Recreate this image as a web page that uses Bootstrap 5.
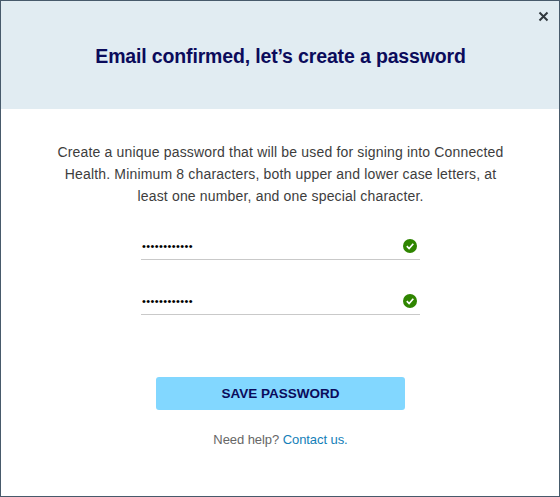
<!DOCTYPE html>
<html lang="en">
<head>
<meta charset="utf-8">
<meta name="viewport" content="width=device-width, initial-scale=1">
<title>Create a password</title>
<link href="https://cdn.jsdelivr.net/npm/bootstrap@5.3.0/dist/css/bootstrap.min.css" rel="stylesheet">
<style>
body { font-family: "Liberation Sans", Arial, sans-serif; }
.dialog { height: 497px; border: 1px solid #475a6b; }
.dialog-top { height: 108px; background: #e1ecf2; }
.dialog-title { font-size: 19.5px; line-height: 24px; color: #0b0b5b; letter-spacing: -.15px; margin: 1px 0 0 1px; white-space: nowrap; }
.close-btn { top: 10px; right: 10px; line-height: 0; }
.intro { font-size: 14px; line-height: 22px; color: #3d3d3d; letter-spacing: .17px; margin: 32px 0 0 1px; white-space: nowrap; }
.fields { width: 279px; margin: 25px 0 0 1px; gap: 27px; }
.field { height: 28px; border-bottom: 1px solid #c9c9c9; }
.field input { font: 11px "Liberation Sans", Arial, sans-serif; letter-spacing: .4px; color: #000; padding: 0 0 0 1px; height: 26px; outline: 0; }
.field svg { margin: 0 3px 0 0; }
.save-btn { width: 249px; height: 33px; margin: 62px 0 0 1px; font-size: 13.5px; line-height: 33px; color: #0b0b5b; background: #82d7ff; border-radius: 3px; }
.help { font-size: 13px; line-height: 20px; color: #666; letter-spacing: -.07px; margin: 20px 0 0 1px; }
.help a { color: #1480b8; }
</style>
<script src="https://cdn.jsdelivr.net/npm/bootstrap@5.3.0/dist/js/bootstrap.bundle.min.js"></script>
</head>
<body>
<main class="dialog position-relative d-flex flex-column align-items-center overflow-hidden bg-white">
  <header class="dialog-top w-100 d-flex align-items-center justify-content-center">
    <h1 class="dialog-title fw-bold">Email confirmed, let’s create a password</h1>
    <button type="button" class="close-btn position-absolute border-0 bg-transparent p-0" aria-label="Close">
      <svg width="11" height="11" viewBox="0 0 11 11" fill="none" stroke="#30383e" stroke-width="2"><path d="M1.5 1.5l8 8M9.5 1.5l-8 8"/></svg>
    </button>
  </header>
  <p class="intro text-center">Create a unique password that will be used for signing into Connected<br>Health. Minimum 8 characters, both upper and lower case letters, at<br>least one number, and one special character.</p>
  <form class="fields d-flex flex-column">
    <div class="field d-flex align-items-center">
      <input type="password" class="flex-grow-1 border-0 bg-transparent" value="xxxxxxxxxxxx" aria-label="Password">
      <svg width="14" height="14" viewBox="0 0 14 14"><circle cx="7" cy="7" r="7" fill="#2f8500"/><path d="M3.8 7.2l2.3 2.3 4.2-4.8" fill="none" stroke="#fff" stroke-width="1.7"/></svg>
    </div>
    <div class="field d-flex align-items-center">
      <input type="password" class="flex-grow-1 border-0 bg-transparent" value="xxxxxxxxxxxx" aria-label="Confirm password">
      <svg width="14" height="14" viewBox="0 0 14 14"><circle cx="7" cy="7" r="7" fill="#2f8500"/><path d="M3.8 7.2l2.3 2.3 4.2-4.8" fill="none" stroke="#fff" stroke-width="1.7"/></svg>
    </div>
  </form>
  <button type="button" class="save-btn btn border-0 p-0 fw-bold">SAVE PASSWORD</button>
  <p class="help">Need help? <a href="#" class="text-decoration-none">Contact us.</a></p>
</main>
</body>
</html>
